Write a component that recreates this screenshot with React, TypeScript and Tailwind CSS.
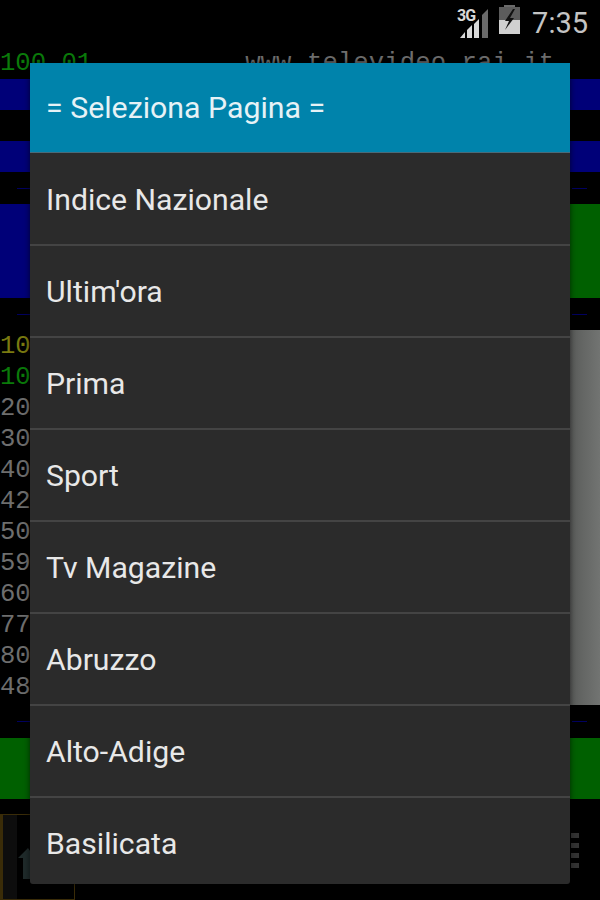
import { Fragment } from 'react';

const pages = [
  'Indice Nazionale',
  "Ultim'ora",
  'Prima',
  'Sport',
  'Tv Magazine',
  'Abruzzo',
  'Alto-Adige',
  'Basilicata',
];

const indexRows = [
  { code: '10', color: 'text-[#7a7a10]' },
  { code: '10', color: 'text-[#0a7a0a]' },
  { code: '20', color: 'text-[#6e6e6e]' },
  { code: '30', color: 'text-[#6e6e6e]' },
  { code: '40', color: 'text-[#6e6e6e]' },
  { code: '42', color: 'text-[#6e6e6e]' },
  { code: '50', color: 'text-[#6e6e6e]' },
  { code: '59', color: 'text-[#6e6e6e]' },
  { code: '60', color: 'text-[#6e6e6e]' },
  { code: '77', color: 'text-[#6e6e6e]' },
  { code: '80', color: 'text-[#6e6e6e]' },
  { code: '48', color: 'text-[#6e6e6e]' },
];

function SignalIcon() {
  return (
    <div className="relative w-[32px] h-[32px]">
      <span className="absolute left-0 top-0 text-[16px] leading-[16px] font-bold text-[#d8d8d8] font-['Roboto',sans-serif] tracking-[-1px]">
        3G
      </span>
      <svg width="32" height="32" viewBox="0 0 32 32" className="absolute inset-0">
        <polygon points="3,30 8,30 8,24" fill="#d8d8d8" />
        <polygon points="10,30 15,30 15,17 10,22" fill="#d8d8d8" />
        <polygon points="17,30 22,30 22,11 17,16" fill="#d8d8d8" />
        <polygon points="25,30 31,30 31,1 25,7" fill="#6a6a6a" />
      </svg>
    </div>
  );
}

function BatteryIcon() {
  return (
    <svg width="21" height="29" viewBox="0 0 21 29">
      <rect x="5" y="0" width="11" height="3" fill="#6a6a6a" />
      <rect x="0" y="2" width="21" height="13" fill="#5c5c5c" />
      <rect x="0" y="15" width="21" height="14" fill="#d0d0d0" />
      <polygon points="14,4 6,16 10,16 6,25 15,13 11,13 16,4" fill="#111111" />
    </svg>
  );
}

function ScanLine() {
  return (
    <div className="h-[32px] flex items-center justify-between pl-[17px] pr-[13px]">
      <div className="w-[14px] h-[1px] bg-[#000060]" />
      <div className="w-[15px] h-[1px] bg-[#000060]" />
    </div>
  );
}

function Toolbar() {
  return (
    <div className="h-[86px] mt-[15px] flex justify-between">
      <div className="w-[75px] border-t border-r border-b border-l-[3px] border-[#3a2c08] flex items-center">
        <div className="w-[14px] h-full bg-[#0d0d0d]" />
        <svg width="18" height="34" viewBox="0 0 18 34" className="mt-[14px]">
          <path d="M11 1 L1 11 H6 V32 H14 V11 H18 Z" fill="#1f2a2a" />
        </svg>
      </div>
      <div className="w-[29px] flex flex-col items-start gap-[5px] pt-[19px]">
        <div className="w-[8px] h-[5px] bg-[#333333]" />
        <div className="w-[8px] h-[5px] bg-[#333333]" />
        <div className="w-[8px] h-[5px] bg-[#333333]" />
        <div className="w-[8px] h-[5px] bg-[#333333]" />
      </div>
    </div>
  );
}

export default function App() {
  return (
    <div className="relative w-[600px] h-[900px] overflow-hidden bg-black font-['Liberation_Mono',monospace]">
      {/* status bar */}
      <div className="h-[48px] flex items-start justify-end pr-[12px]">
        <div className="mt-[8px]">
          <SignalIcon />
        </div>
        <div className="mt-[5px] ml-[10px]">
          <BatteryIcon />
        </div>
        <span className="mt-[8px] ml-[12px] text-[29px] leading-[30px] text-[#c4c4c4] font-['Roboto',sans-serif]">7:35</span>
      </div>

      {/* teletext page behind the dialog */}
      <div className="h-[31px] flex text-[25.6px] leading-[31px] whitespace-pre">
        <span className="text-[#0a7a0a]">100.01</span>
        <span className="text-[#6e6e6e] ml-[153px] tracking-[0.1px]">www.televideo.rai.it</span>
      </div>
      <div className="h-[31px] bg-[#000078]" />
      <div className="h-[31px]" />
      <div className="h-[31px] bg-[#000078]" />
      <ScanLine />
      <div className="h-[94px] flex">
        <div className="flex-1 bg-[#000078]" />
        <div className="flex-1 bg-[#006000]" />
      </div>
      <ScanLine />
      <div className="h-[375px] flex justify-between">
        <div className="pt-[1px] text-[25.6px] leading-[31px]">
          {indexRows.map((row, i) => (
            <div key={i} className={row.color}>
              {row.code}
            </div>
          ))}
        </div>
        <div className="w-[30px] bg-gradient-to-r from-[#5a5c5a] to-[#727472]" />
      </div>
      <ScanLine />
      <div className="h-[61px] mt-[1px] bg-[#006000]" />
      <Toolbar />

      {/* page picker dialog */}
      <div className="absolute left-[30px] top-[63px] w-[540px] h-[821px] overflow-hidden rounded-b-[3px] bg-[#2b2b2b] shadow-[0_0_6px_rgba(0,0,0,0.6)] font-['Roboto',sans-serif]">
        <div className="h-[90px] pl-[16px] flex items-center bg-[#0083ab] border-b border-[#4a6a78] text-[30.3px] text-[#e6f2f6]">
          = Seleziona Pagina =
        </div>
        <div className="pt-[1px]">
          {pages.map((name, i) => (
            <Fragment key={name}>
              {i > 0 && <div className="h-[2px] bg-[#444444]" />}
              <div className="h-[90px] pl-[16px] pt-[2px] flex items-center text-[30.2px] text-[#e8e8e8]">{name}</div>
            </Fragment>
          ))}
        </div>
      </div>
    </div>
  );
}
